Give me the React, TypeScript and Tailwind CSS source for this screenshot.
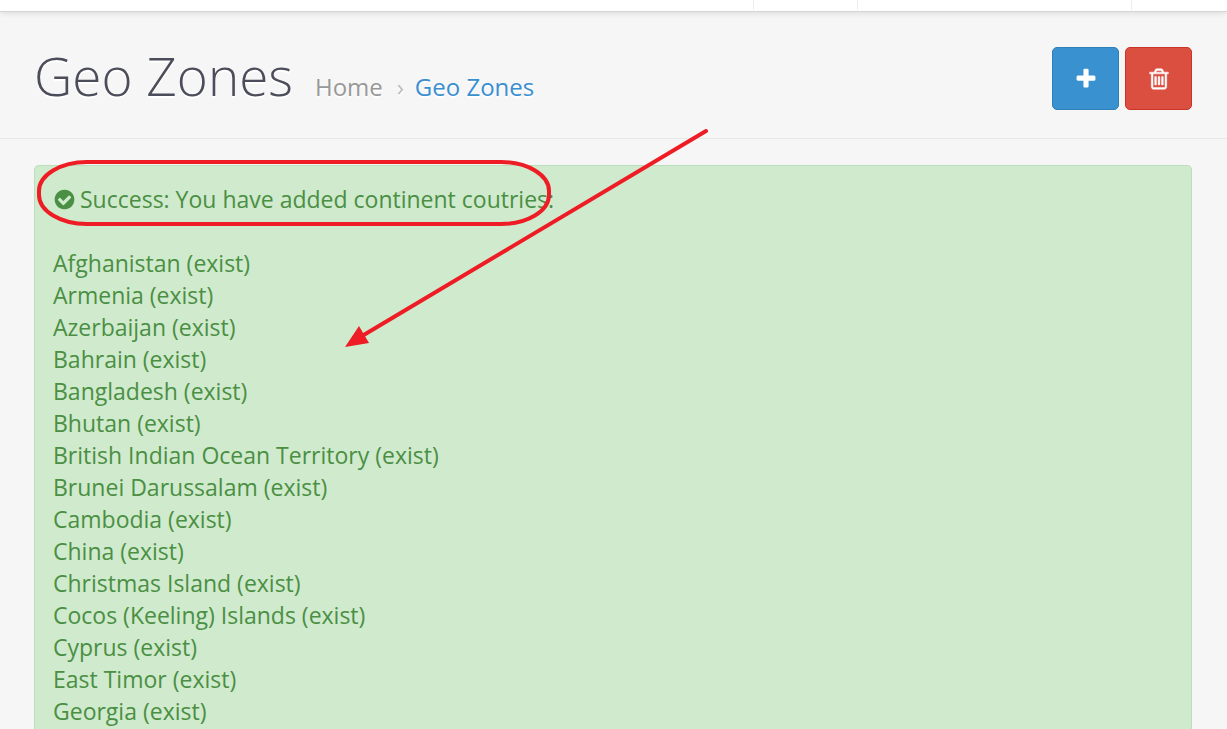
import React from "react";

const countries = [
  "Afghanistan",
  "Armenia",
  "Azerbaijan",
  "Bahrain",
  "Bangladesh",
  "Bhutan",
  "British Indian Ocean Territory",
  "Brunei Darussalam",
  "Cambodia",
  "China",
  "Christmas Island",
  "Cocos (Keeling) Islands",
  "Cyprus",
  "East Timor",
  "Georgia",
];

const icons = {
  plus: "M1600 736v192q0 40-28 68t-68 28h-416v416q0 40-28 68t-68 28h-192q-40 0-68-28t-28-68v-416h-416q-40 0-68-28t-28-68v-192q0-40 28-68t68-28h416v-416q0-40 28-68t68-28h192q40 0 68 28t28 68v416h416q40 0 68 28t28 68z",
  trash:
    "M704 736v576q0 14-9 23t-23 9h-64q-14 0-23-9t-9-23v-576q0-14 9-23t23-9h64q14 0 23 9t9 23zm256 0v576q0 14-9 23t-23 9h-64q-14 0-23-9t-9-23v-576q0-14 9-23t23-9h64q14 0 23 9t9 23zm256 0v576q0 14-9 23t-23 9h-64q-14 0-23-9t-9-23v-576q0-14 9-23t23-9h64q14 0 23 9t9 23zm128 724v-948h-896v948q0 22 7 40.5t14.5 27 10.5 8.5h832q3 0 10.5-8.5t14.5-27 7-40.5zm-672-1076h448l-48-117q-7-9-17-11h-317q-10 2-17 11zm928 32v64q0 14-9 23t-23 9h-96v948q0 83-47 143.5t-113 60.5h-832q-66 0-113-58.5t-47-141.5v-952h-96q-14 0-23-9t-9-23v-64q0-14 9-23t23-9h309l70-167q15-37 54-63t79-26h320q40 0 79 26t54 63l70 167h309q14 0 23 9t9 23z",
  check:
    "M1412 734q0-28-18-46l-91-90q-19-19-45-19t-45 19l-408 407-226-226q-19-19-45-19t-45 19l-91 90q-18 18-18 46 0 27 18 45l362 362q19 19 45 19 27 0 46-19l543-543q18-18 18-45zm252 162q0 209-103 385.5t-279.5 279.5-385.5 103-385.5-103-279.5-279.5-103-385.5 103-385.5 279.5-279.5 385.5-103 385.5 103 279.5 279.5 103 385.5z",
};

const Icon = ({ name, className }: { name: keyof typeof icons; className: string }) => (
  <svg viewBox="0 0 1792 1792" fill="currentColor" aria-hidden="true" className={className}>
    <path
      d={icons[name]}
      stroke="currentColor"
      strokeWidth={name === "trash" ? 36 : 0}
    />
  </svg>
);

const TopBar = () => (
  <header className="relative flex h-3 justify-end border-b border-[#d4d4d4] bg-white pb-px shadow-[0_1px_6px_rgba(0,0,0,0.12)]">
    <div className="w-[104px] border-l border-[#ededed]" />
    <div className="w-[274px] border-l border-[#ededed]" />
    <div className="w-24 border-l border-[#ededed]" />
  </header>
);

const PageHeader = () => (
  <div className="flex items-start justify-between border-b border-[#e7e7e7] pt-[35px] pr-[35px] pb-7 pl-[34px]">
    <div className="flex items-baseline gap-[22px] [text-shadow:0_2px_#fff]">
      <h1 className="text-[53px] leading-[58px] font-light text-[#4c4d5a]">Geo Zones</h1>
      <nav aria-label="Breadcrumb">
        <ol className="flex items-baseline text-[24px] leading-8">
          <li>
            <a href="#home" className="text-[#999]">
              Home
            </a>
          </li>
          <li aria-hidden="true" className="w-8 pl-[14px] text-[#bbb]">
            ›
          </li>
          <li>
            <a href="#geo-zones" className="text-[#3a8fd0]">
              Geo Zones
            </a>
          </li>
        </ol>
      </nav>
    </div>
    <div className="flex gap-1.5">
      <button
        type="button"
        aria-label="Add New"
        className="flex h-[63px] w-[67px] items-center justify-center rounded-[5px] border border-[#2f7fb8] bg-[#3a91cf] text-white"
      >
        <Icon name="plus" className="size-6" />
      </button>
      <button
        type="button"
        aria-label="Delete"
        className="flex h-[63px] w-[67px] items-center justify-center rounded-[5px] border border-[#cb3527] bg-[#db4f40] text-white"
      >
        <Icon name="trash" className="size-6" />
      </button>
    </div>
  </div>
);

// Hand-drawn red markup lying over the alert
const Annotations = () => (
  <svg
    width="720"
    height="360"
    fill="none"
    stroke="#ee1c25"
    aria-hidden="true"
    className="pointer-events-none absolute top-0 left-0"
  >
    <rect x="39" y="162" width="510" height="62" rx="48" ry="29" strokeWidth="4" />
    <path d="M706 131L362 336" strokeWidth="4" strokeLinecap="round" />
    <path d="M345 347L359 326L369 343Z" fill="#ee1c25" stroke="none" />
  </svg>
);

const App = () => {
  return (
    <div className="relative flex min-h-screen flex-col bg-[#f6f6f6] font-['Open_Sans',sans-serif]">
      <TopBar />
      <PageHeader />
      <main className="flex grow flex-col pt-[26px] pr-[35px] pl-[34px]">
        <div
          role="alert"
          className="grow rounded-t-[5px] border border-b-0 border-[#bbdfbb] bg-[#d0eacd] px-[18px] pt-[17px] text-[23px] leading-8 text-[#4a8f43]"
        >
          <p className="mb-8 flex items-center gap-1">
            <Icon name="check" className="size-[23px] shrink-0" />
            Success: You have added continent coutries:
          </p>
          <ul>
            {countries.map((country) => (
              <li key={country}>{country} (exist)</li>
            ))}
          </ul>
        </div>
      </main>
      <Annotations />
    </div>
  );
};

export default App;
